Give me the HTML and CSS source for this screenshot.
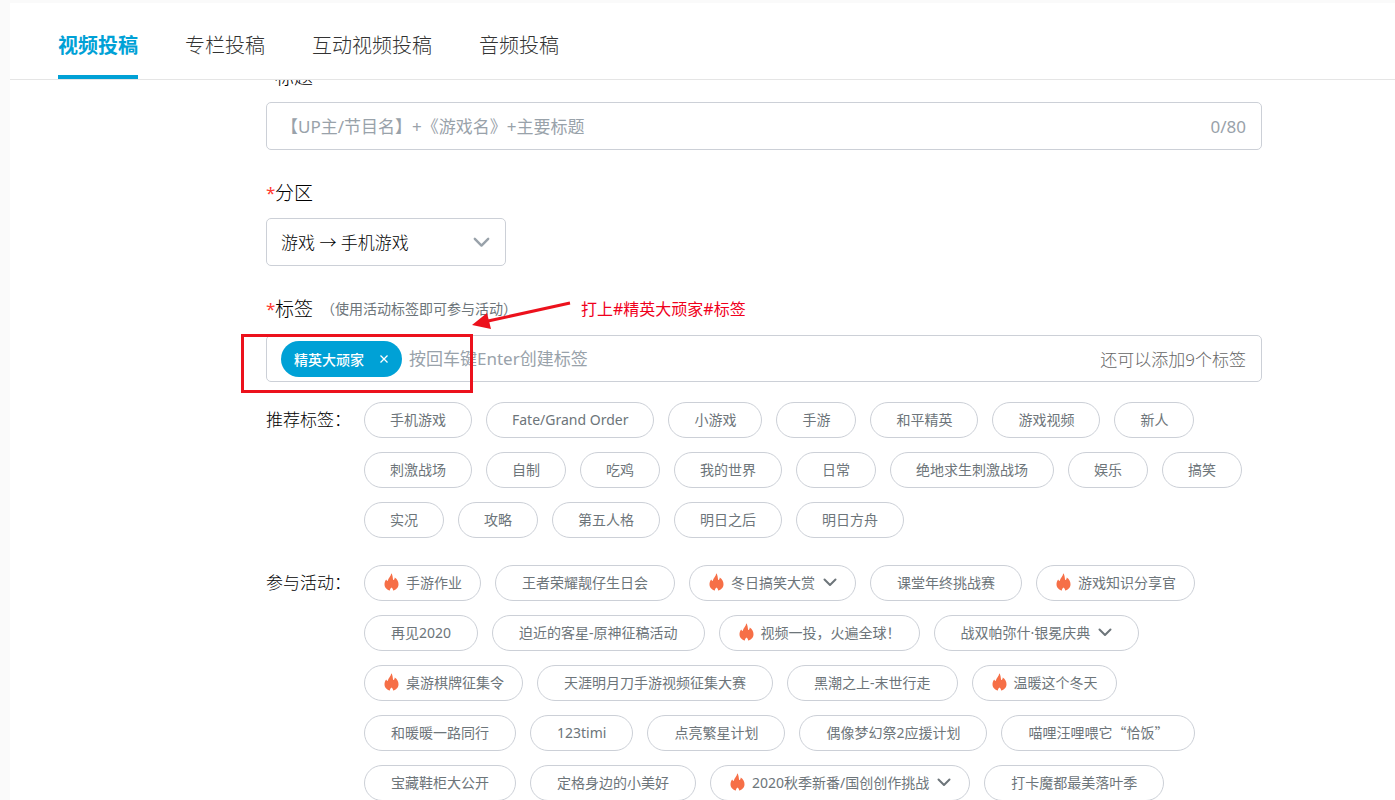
FILE: index.html
```html
<!DOCTYPE html>
<html lang="zh-CN">
<head>
    <meta charset="UTF-8">
    <meta name="viewport" content="width=device-width, initial-scale=1.0">
    <title>视频投稿</title>
    <link rel="stylesheet" href="styles.css">
</head>
<body>

    <!-- 公用图标 -->
    <svg class="icon-defs" aria-hidden="true">
        <symbol id="fire" viewBox="0 0 15 18">
            <path d="M7.3 0.3C8.5 2 8.8 4.2 9 6.2C9.2 7.2 9.8 7.3 10.2 6.6C10.5 5.9 10.7 5.2 10.7 4.4C13.2 6 14.5 8.3 14.5 11.2C14.5 14.5 12.4 16.8 9 17.4C9.2 16.4 8.7 15.4 7.5 14.4C6.3 15.4 5.8 16.4 6 17.4C2.7 16.8 0.5 14.5 0.5 11.2C0.5 9.3 1.1 7.7 2.2 6.4C2.5 7.3 3 7.9 3.7 8.1C4.2 5.2 6.9 3.6 7.3 0.3Z"/>
        </symbol>
        <symbol id="down" viewBox="0 0 14 9">
            <path d="M1.5 1.5L7 7L12.5 1.5" fill="none" stroke="currentColor" stroke-width="2" stroke-linecap="round" stroke-linejoin="round"/>
        </symbol>
    </svg>

    <div class="page">
        <nav class="tabs">
            <a class="tab active" href="#video">视频投稿</a>
            <a class="tab" href="#article">专栏投稿</a>
            <a class="tab" href="#interactive">互动视频投稿</a>
            <a class="tab" href="#audio">音频投稿</a>
        </nav>

        <form class="form">
            <!-- 标题 -->
            <div class="form-item">
                <label class="form-label" for="title"><span class="required">*</span>标题</label>
                <div class="field">
                    <input class="field-input" type="text" id="title" maxlength="80" placeholder="【UP主/节目名】+《游戏名》+主要标题">
                    <span class="count">0/80</span>
                </div>
            </div>

            <!-- 分区 -->
            <div class="form-item">
                <label class="form-label" for="zone"><span class="required">*</span>分区</label>
                <div class="field zone">
                    <select class="zone-select" id="zone">
                        <option>游戏 → 手机游戏</option>
                    </select>
                    <svg class="zone-arrow"><use href="#down"/></svg>
                </div>
            </div>

            <!-- 标签 -->
            <div class="form-item tag-item">
                <label class="form-label" for="tag"><span class="required">*</span>标签<span class="hint">（使用活动标签即可参与活动）</span></label>
                <div class="field tag-field">
                    <button class="tag-selected" type="button">精英大顽家
                        <svg class="close" viewBox="0 0 10 10"><path d="M1.5 1.5L8.5 8.5M8.5 1.5L1.5 8.5" stroke="#fff" stroke-width="1.3"/></svg>
                    </button>
                    <input class="field-input" type="text" id="tag" placeholder="按回车键Enter创建标签">
                    <span class="rest">还可以添加9个标签</span>
                </div>

                <!-- 标注 -->
                <div class="mark-box"></div>
                <svg class="mark-arrow" viewBox="0 0 100 32">
                    <path d="M98 7L16 25" stroke="#ec111c" stroke-width="3"/>
                    <path d="M0 29L15 17L19 33Z" fill="#ec111c"/>
                </svg>
                <span class="mark-text">打上#精英大顽家#标签</span>
            </div>

            <div class="tag-row">
                <span class="tag-title">推荐标签：</span>
                <div class="chips">
                    <button class="chip" type="button">手机游戏</button>
                    <button class="chip" type="button">Fate/Grand Order</button>
                    <button class="chip" type="button">小游戏</button>
                    <button class="chip" type="button">手游</button>
                    <button class="chip" type="button">和平精英</button>
                    <button class="chip" type="button">游戏视频</button>
                    <button class="chip" type="button">新人</button>
                    <button class="chip" type="button">刺激战场</button>
                    <button class="chip" type="button">自制</button>
                    <button class="chip" type="button">吃鸡</button>
                    <button class="chip" type="button">我的世界</button>
                    <button class="chip" type="button">日常</button>
                    <button class="chip" type="button">绝地求生刺激战场</button>
                    <button class="chip" type="button">娱乐</button>
                    <button class="chip" type="button">搞笑</button>
                    <button class="chip" type="button">实况</button>
                    <button class="chip" type="button">攻略</button>
                    <button class="chip" type="button">第五人格</button>
                    <button class="chip" type="button">明日之后</button>
                    <button class="chip" type="button">明日方舟</button>
                </div>
            </div>

            <div class="tag-row">
                <span class="tag-title">参与活动：</span>
                <div class="chips activity">
                    <button class="chip hot" type="button"><svg class="fire"><use href="#fire"/></svg>手游作业</button>
                    <button class="chip" type="button">王者荣耀靓仔生日会</button>
                    <button class="chip hot" type="button"><svg class="fire"><use href="#fire"/></svg>冬日搞笑大赏<svg class="more"><use href="#down"/></svg></button>
                    <button class="chip" type="button">课堂年终挑战赛</button>
                    <button class="chip hot" type="button"><svg class="fire"><use href="#fire"/></svg>游戏知识分享官</button>
                    <button class="chip" type="button">再见2020</button>
                    <button class="chip" type="button">迫近的客星-原神征稿活动</button>
                    <button class="chip hot" type="button"><svg class="fire"><use href="#fire"/></svg>视频一投，火遍全球！</button>
                    <button class="chip" type="button">战双帕弥什·银冕庆典<svg class="more"><use href="#down"/></svg></button>
                    <button class="chip hot" type="button"><svg class="fire"><use href="#fire"/></svg>桌游棋牌征集令</button>
                    <button class="chip" type="button">天涯明月刀手游视频征集大赛</button>
                    <button class="chip" type="button">黑潮之上-末世行走</button>
                    <button class="chip hot" type="button"><svg class="fire"><use href="#fire"/></svg>温暖这个冬天</button>
                    <button class="chip" type="button">和暖暖一路同行</button>
                    <button class="chip" type="button">123timi</button>
                    <button class="chip" type="button">点亮繁星计划</button>
                    <button class="chip" type="button">偶像梦幻祭2应援计划</button>
                    <button class="chip cjk" type="button">喵哩汪哩喂它“恰饭”</button>
                    <button class="chip" type="button">宝藏鞋柜大公开</button>
                    <button class="chip" type="button">定格身边的小美好</button>
                    <button class="chip hot" type="button"><svg class="fire"><use href="#fire"/></svg>2020秋季新番/国创创作挑战<svg class="more"><use href="#down"/></svg></button>
                    <button class="chip" type="button">打卡魔都最美落叶季</button>
                </div>
            </div>
        </form>
    </div>

</body>
</html>
```
FILE: styles.css
```css
* {
    box-sizing: border-box;
}
body {
    margin: 0;
    padding: 3px 0 0 10px;
    background-color: #fafafa;
    color: #212121;
    font-family: "Noto Sans", "Noto Sans CJK SC", sans-serif;
    font-size: 17px;
}
button, input, select {
    font-family: inherit;
}
.icon-defs {
    position: absolute;
    width: 0;
    height: 0;
}
.page {
    background-color: #fff;
}

/* 顶部导航 */
.tabs {
    position: sticky;
    top: 0;
    z-index: 1;
    display: flex;
    gap: 47px;
    height: 77px;
    padding: 0 48px;
    background-color: #fff;
    border-bottom: 1px solid #e5e5e5;
}
.tab {
    line-height: 86px;
    font-size: 20px;
    font-weight: 300;
    color: #333;
    text-decoration: none;
}
.tab.active {
    height: 76px;
    color: #00a1d6;
    font-weight: bold;
    border-bottom: 4px solid #00a1d6;
}

/* 表单 */
.form {
    margin: -18px 133px 0 256px;
}
.form-item {
    margin-bottom: 28px;
}
.form-label {
    display: flex;
    align-items: center;
    height: 28px;
    margin-bottom: 12px;
    font-size: 19px;
    font-weight: 300;
    color: #000;
}
.required {
    width: 9px;
    font-size: 17px;
    font-weight: 400;
    color: #ff3b30;
}
.hint {
    margin-left: 8px;
    font-size: 14px;
    font-weight: 400;
    color: #6d757a;
}
.field {
    display: flex;
    align-items: center;
    height: 48px;
    padding: 0 15px 0 14px;
    border: 1px solid #ccd0d7;
    border-radius: 5px;
}
.field-input {
    flex: 1;
    min-width: 0;
    padding: 0;
    border: none;
    outline: none;
    background: none;
    font-size: 17px;
}
.field-input::placeholder {
    color: #99a2aa;
}
.count {
    color: #99a2aa;
}
.rest {
    font-weight: 300;
    color: #666;
}
.zone {
    position: relative;
    width: 240px;
    padding: 0;
}
.zone-select {
    width: 100%;
    height: 100%;
    padding: 0 40px 0 14px;
    border: none;
    background: none;
    appearance: none;
    color: #000;
    font-size: 17px;
    font-weight: 300;
}
.zone-arrow {
    position: absolute;
    right: 15px;
    width: 17px;
    height: 11px;
    color: #99a2aa;
    pointer-events: none;
}
.tag-item {
    position: relative;
    margin-bottom: 20px;
}
.tag-item .form-label {
    margin-bottom: 13px;
}
.tag-field {
    height: 47px;
}
.tag-selected {
    display: flex;
    align-items: center;
    gap: 15px;
    height: 36px;
    margin-right: 7px;
    padding: 0 13px;
    border: none;
    border-radius: 18px;
    background-color: #00a1d6;
    color: #fff;
    font-size: 14px;
    font-weight: 500;
}
.close {
    width: 10px;
    height: 10px;
}

/* 红色标注 */
.mark-box {
    position: absolute;
    left: -25px;
    top: 40px;
    width: 232px;
    height: 59px;
    border: 3px solid #ec111c;
}
.mark-arrow {
    position: absolute;
    left: 206px;
    top: 2px;
    width: 100px;
    height: 32px;
    overflow: visible;
}
.mark-text {
    position: absolute;
    left: 315px;
    top: 5px;
    line-height: 20px;
    font-size: 16px;
    color: #f0001c;
}

/* 标签列表 */
.tag-row {
    display: flex;
    margin-bottom: 27px;
}
.tag-title {
    flex: none;
    width: 98px;
    line-height: 36px;
    font-weight: 300;
    color: #000;
}
.chips {
    display: flex;
    flex-wrap: wrap;
    gap: 14px;
}
.chip {
    display: flex;
    align-items: center;
    height: 36px;
    padding: 0 25px 2px;
    border: 1px solid #ccd0d7;
    border-radius: 18px;
    background-color: #fff;
    color: #6d757a;
    font-size: 14px;
    white-space: nowrap;
}
.activity .chip {
    padding: 0 26px 2px;
}
.activity .hot {
    padding: 0 18px 2px 19px;
}
.cjk {
    font-family: "Noto Sans CJK SC", sans-serif;
}
.fire {
    width: 15px;
    height: 18px;
    margin-right: 7px;
    fill: #f66f47;
}
.more {
    width: 14px;
    height: 9px;
    margin-left: 8px;
}
```
